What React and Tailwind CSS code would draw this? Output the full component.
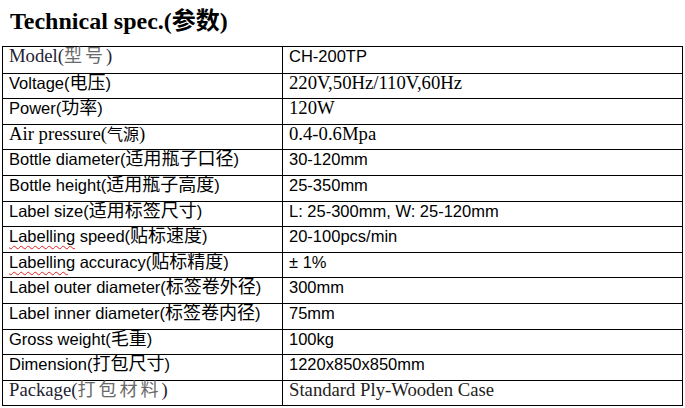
import React from 'react';

const sans = "font-['Liberation_Sans','Noto_Sans_CJK_SC',sans-serif] text-[16.5px]";
const serif = "font-['Liberation_Serif','Noto_Sans_CJK_SC',serif] text-[18.7px]";

// each row: label (latin + chinese), value, and which face each side uses
const rows = [
  { en: 'Model', zh: '型号', value: 'CH-200TP', left: 'serif', right: 'sans', muted: true },
  { en: 'Voltage', zh: '电压', value: '220V,50Hz/110V,60Hz', left: 'sans', right: 'serif' },
  { en: 'Power', zh: '功率', value: '120W', left: 'sans', right: 'serif' },
  { en: 'Air pressure', zh: '气源', value: '0.4-0.6Mpa', left: 'serif', right: 'serif', small: true },
  { en: 'Bottle diameter', zh: '适用瓶子口径', value: '30-120mm', left: 'sans', right: 'sans' },
  { en: 'Bottle height', zh: '适用瓶子高度', value: '25-350mm', left: 'sans', right: 'sans' },
  { en: 'Label size', zh: '适用标签尺寸', value: 'L: 25-300mm, W: 25-120mm', left: 'sans', right: 'sans' },
  { en: 'Labelling speed', zh: '贴标速度', value: '20-100pcs/min', left: 'sans', right: 'sans', wavy: true },
  { en: 'Labelling accuracy', zh: '贴标精度', value: '± 1%', left: 'sans', right: 'sans', wavy: true },
  { en: 'Label outer diameter', zh: '标签卷外径', value: '300mm', left: 'sans', right: 'sans' },
  { en: 'Label inner diameter', zh: '标签卷内径', value: '75mm', left: 'sans', right: 'sans' },
  { en: 'Gross weight', zh: '毛重', value: '100kg', left: 'sans', right: 'sans' },
  { en: 'Dimension', zh: '打包尺寸', value: '1220x850x850mm', left: 'sans', right: 'sans' },
  { en: 'Package', zh: '打包材料', value: 'Standard Ply-Wooden Case', left: 'serif', right: 'serif', muted: true },
];

function Label({ row }) {
  let en = row.en;
  if (row.wavy) {
    const rest = row.en.slice('Labelling'.length);
    en = (
      <>
        <span className="underline decoration-wavy decoration-[#e02020] decoration-1 underline-offset-[3px]">Labelling</span>
        {rest}
      </>
    );
  }
  let zhCls = 'text-[18px]';
  if (row.small) zhCls = 'text-[16px]';
  if (row.muted) zhCls = 'text-[18px] tracking-[3px] text-[#6a6a6a]';
  return (
    <span className={row.muted ? 'text-[#222233]' : ''}>
      {en}(<span className={zhCls}>{row.zh}</span>)
    </span>
  );
}

export default function App() {
  return (
    <div className="w-[685px] h-[408px] bg-white text-black overflow-hidden">
      <h1 className="h-[46px] pt-[9px] pl-[10px] font-['Liberation_Serif','Noto_Sans_CJK_SC',serif] text-[24px] leading-[24px] font-bold">
        Technical spec.(参数)
      </h1>

      <div className="ml-[2px] w-[681px] border border-black">
        {rows.map((r, i) => (
          <div
            key={r.en}
            className={'grid grid-cols-[280px_1fr] h-[25.6px] ' + (i > 0 ? 'border-t border-black' : '')}
          >
            <div className={'border-r border-black pl-[6px] leading-[18px] whitespace-nowrap ' + (r.left === 'serif' ? serif : sans)}>
              <Label row={r} />
            </div>
            <div className={'pl-[6px] leading-[18px] whitespace-nowrap ' + (r.right === 'serif' ? serif : sans) + (r.muted && r.right === 'serif' ? ' text-[#222]' : '')}>
              {r.value}
            </div>
          </div>
        ))}
      </div>
    </div>
  );
}
